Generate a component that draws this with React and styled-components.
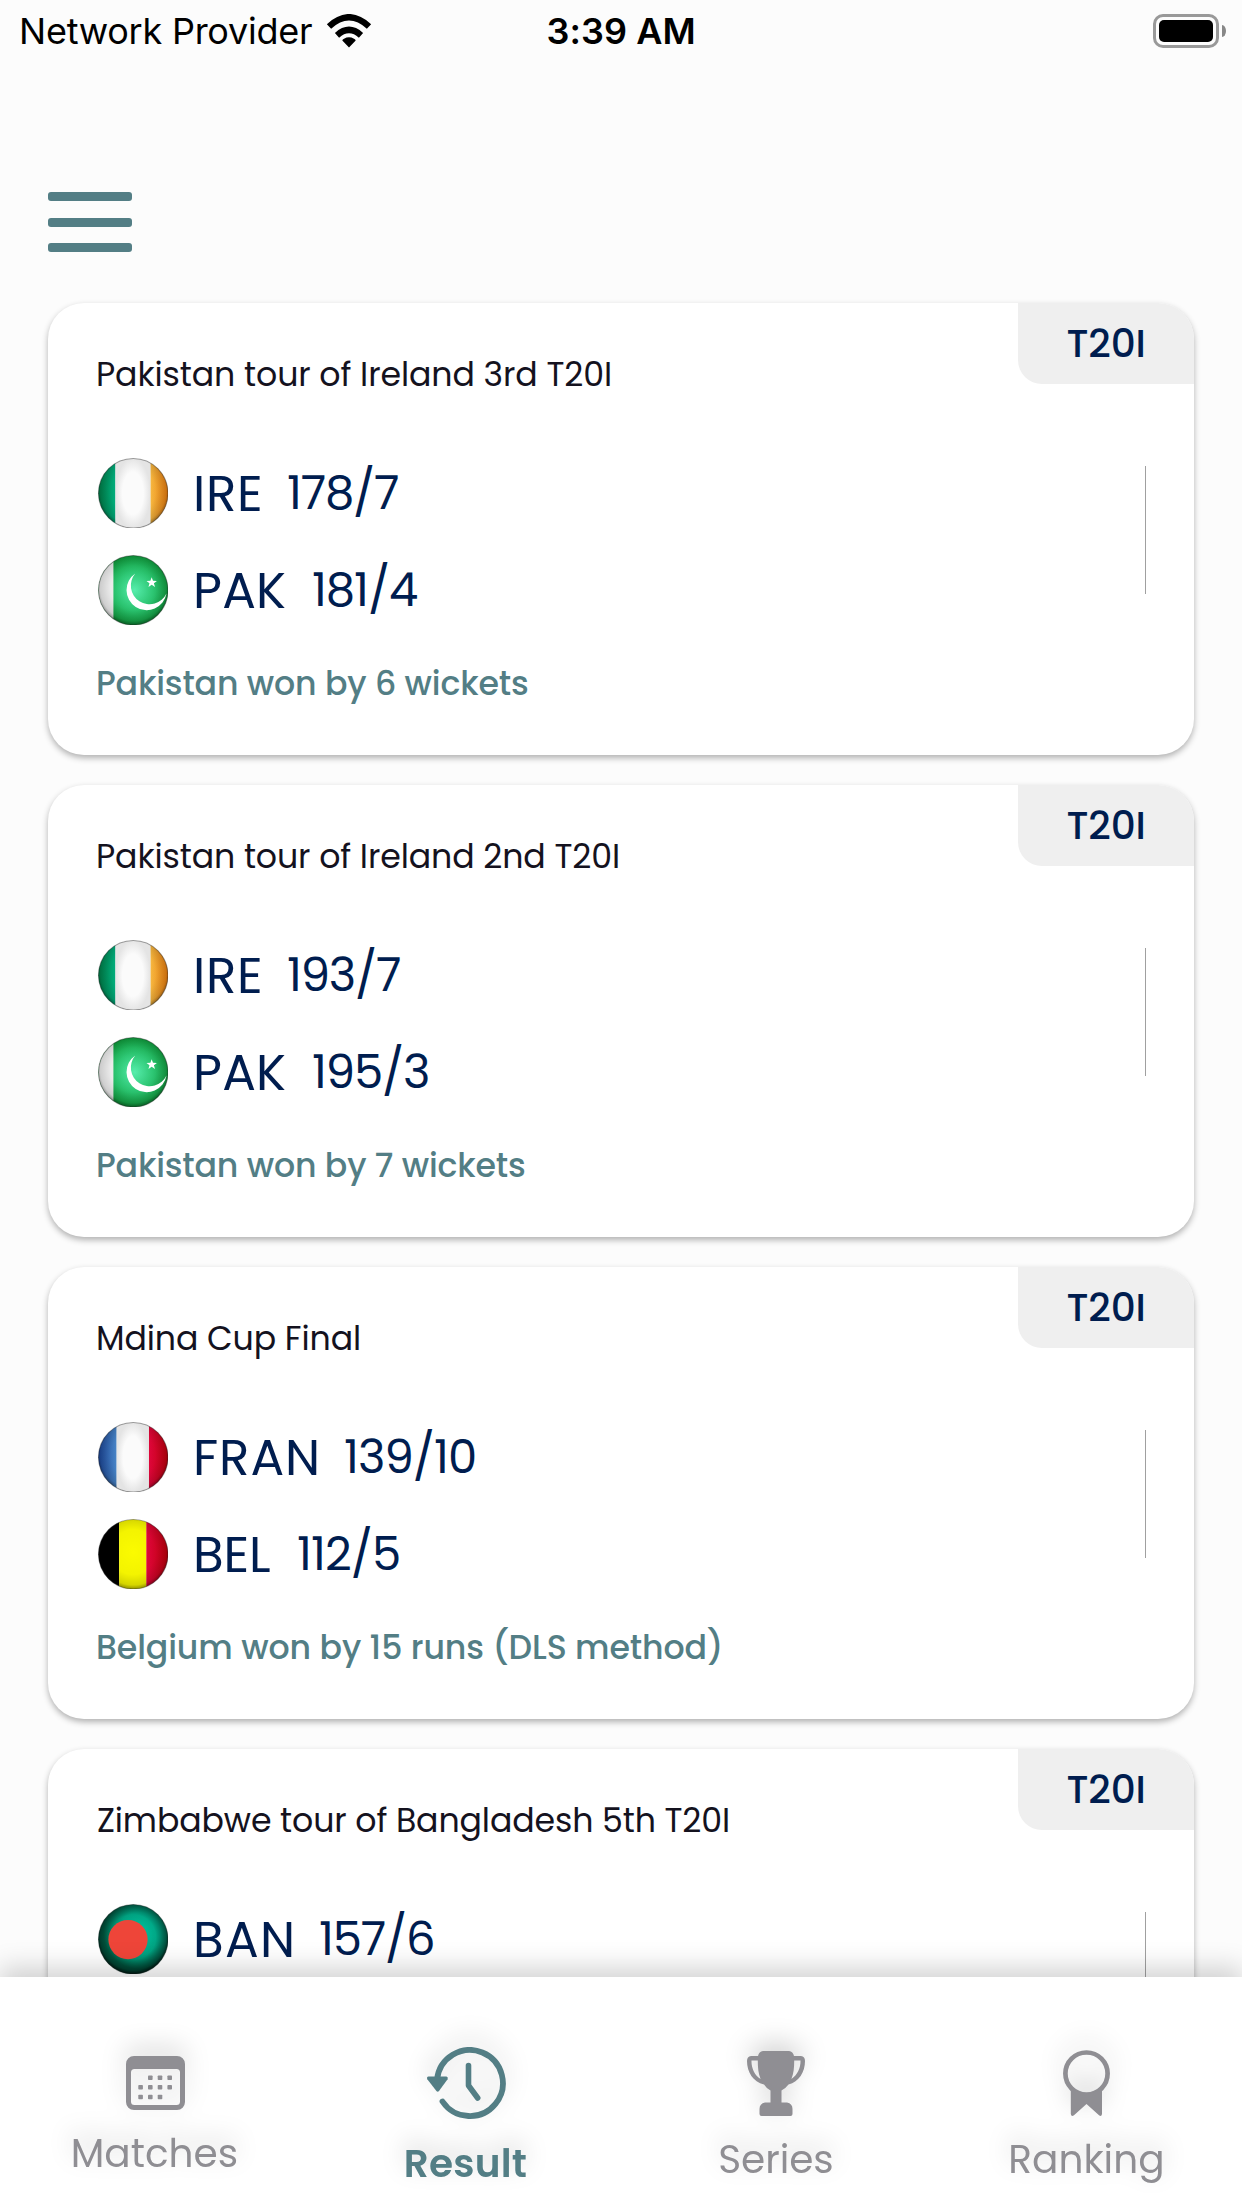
import React, { useLayoutEffect, useRef, useState } from 'react';
import styled, { createGlobalStyle } from 'styled-components';

const TEAL = '#537e85';
const NAVY = '#001d4f';
const GREY = '#8f8e93';

const matches = [
    {
        title: 'Pakistan tour of Ireland 3rd T20I', titleWidth: 512,
        type: 'T20I',
        teams: [
            { flag: 'ireland', code: 'IRE', codeWidth: 64, score: '178/7', scoreWidth: 110 },
            { flag: 'pakistan', code: 'PAK', codeWidth: 89, score: '181/4', scoreWidth: 104 },
        ],
        result: 'Pakistan won by 6 wickets', resultWidth: 430,
    },
    {
        title: 'Pakistan tour of Ireland 2nd T20I', titleWidth: 520,
        type: 'T20I',
        teams: [
            { flag: 'ireland', code: 'IRE', codeWidth: 64, score: '193/7', scoreWidth: 112 },
            { flag: 'pakistan', code: 'PAK', codeWidth: 89, score: '195/3', scoreWidth: 115 },
        ],
        result: 'Pakistan won by 7 wickets', resultWidth: 427,
    },
    {
        title: 'Mdina Cup Final', titleWidth: 261,
        type: 'T20I',
        teams: [
            { flag: 'france', code: 'FRAN', codeWidth: 121, score: '139/10', scoreWidth: 130 },
            { flag: 'belgium', code: 'BEL', codeWidth: 74, score: '112/5', scoreWidth: 101 },
        ],
        result: 'Belgium won by 15 runs (DLS method)', resultWidth: 622,
    },
    {
        title: 'Zimbabwe tour of Bangladesh 5th T20I', titleWidth: 630,
        type: 'T20I',
        teams: [
            { flag: 'bangladesh', code: 'BAN', codeWidth: 96, score: '157/6', scoreWidth: 113 },
        ],
    },
];

// Tracks a line of text in or out until its ink is exactly `width` wide
const FitText = ({ as: Tag, width, children }) => {
    const ref = useRef(null);
    const [fit, setFit] = useState({});

    useLayoutEffect(() => {
        const css = getComputedStyle(ref.current);
        const ctx = document.createElement('canvas').getContext('2d');
        ctx.font = `${css.fontWeight} ${css.fontSize} ${css.fontFamily}`;
        const m = ctx.measureText(children);
        const ink = m.actualBoundingBoxLeft + m.actualBoundingBoxRight;
        setFit({
            letterSpacing: `${(width - ink) / (children.length - 1)}px`,
            textIndent: `${m.actualBoundingBoxLeft}px`,
        });
    }, [children, width]);

    return <Tag ref={ref} $width={width} style={fit}>{children}</Tag>;
};

const Flag = ({ name }) => (
    <FlagSvg viewBox="0 0 70 70">
        <defs>
            <clipPath id={`clip-${name}`}><circle cx="35" cy="35" r="34.6" /></clipPath>
            <radialGradient id={`shade-${name}`} cx="0.5" cy="0.47" r="0.53">
                <stop offset="0" stopColor="#000" stopOpacity="0" />
                <stop offset="0.6" stopColor="#000" stopOpacity="0.03" />
                <stop offset="0.88" stopColor="#000" stopOpacity={name === 'bangladesh' ? 0.4 : 0.15} />
                <stop offset="1" stopColor="#000" stopOpacity={name === 'bangladesh' ? 0.85 : 0.45} />
            </radialGradient>
            <radialGradient id={`white-${name}`} cx="0.5" cy="0.5" r="0.5">
                <stop offset="0.6" stopColor="#fbfbfb" />
                <stop offset="1" stopColor="#e4e4e4" />
            </radialGradient>
            <radialGradient id="pak-green" cx="0.52" cy="0.5" r="0.52">
                <stop offset="0" stopColor="#56edac" />
                <stop offset="0.5" stopColor="#2ecb76" />
                <stop offset="1" stopColor="#0c9a37" />
            </radialGradient>
            <radialGradient id="ban-green" cx="0.58" cy="0.42" r="0.5">
                <stop offset="0" stopColor="#00c8a4" />
                <stop offset="0.6" stopColor="#00a684" />
                <stop offset="1" stopColor="#006a4e" />
            </radialGradient>
            <linearGradient id="ire-green"><stop stopColor="#008048" /><stop offset="1" stopColor="#00b27f" /></linearGradient>
            <linearGradient id="ire-orange"><stop stopColor="#fdbd42" /><stop offset="1" stopColor="#ee7e0c" /></linearGradient>
            <linearGradient id="fra-blue"><stop stopColor="#1b469b" /><stop offset="1" stopColor="#4a88cc" /></linearGradient>
            <linearGradient id="fra-red"><stop stopColor="#e4063c" /><stop offset="1" stopColor="#c2000a" /></linearGradient>
        </defs>
        <g clipPath={`url(#clip-${name})`}>
            {name === 'ireland' && (
                <>
                    <rect width="17.3" height="70" fill="url(#ire-green)" />
                    <rect x="52" width="18" height="70" fill="url(#ire-orange)" />
                </>
            )}
            {name === 'pakistan' && (
                <>
                    <rect width="70" height="70" fill="url(#pak-green)" />
                    <rect width="15.3" height="70" fill="#f2f2f2" />
                </>
            )}
            {name === 'france' && (
                <>
                    <rect width="18.5" height="70" fill="url(#fra-blue)" />
                    <rect x="50.5" width="20" height="70" fill="url(#fra-red)" />
                </>
            )}
            {name === 'belgium' && (
                <>
                    <rect width="21" height="70" fill="#000" />
                    <rect x="21" width="27.2" height="70" fill="#fbfb00" />
                    <rect x="48" width="22" height="70" fill="url(#fra-red)" />
                </>
            )}
            {name === 'bangladesh' && <rect width="70" height="70" fill="url(#ban-green)" />}
            <circle cx="35" cy="35" r="35" fill={`url(#shade-${name})`} />
            {name === 'ireland' && <rect x="17.3" width="34.7" height="70" fill="url(#white-ireland)" />}
            {name === 'france' && <rect x="18.5" width="32" height="70" fill="url(#white-france)" />}
            {name === 'pakistan' && (
                <g fill="#fff">
                    <path d="M37 18.3A20 20 0 1 0 68 38.3A18.6 18.6 0 1 1 37 18.3Z" />
                    <path d="M53.3 22l1.3 3.6 3.9.1-3 2.4 1.1 3.7-3.3-2.2-3.2 2.2 1-3.7-3-2.4 3.9-.1z" />
                </g>
            )}
            {name === 'bangladesh' && <circle cx="29.8" cy="35.3" r="19.5" fill="#ee4539" />}
        </g>
        <circle cx="35" cy="35" r="34.5" fill="none" stroke="#222" strokeOpacity="0.4" />
    </FlagSvg>
);

const MatchCard = ({ match }) => (
    <Card>
        <CardHeader>
            <FitText as={Title} width={match.titleWidth}>{match.title}</FitText>
            <Tag><FitText as={TagText} width={76}>{match.type}</FitText></Tag>
        </CardHeader>
        <CardBody>
            <Teams>
                {match.teams.map((team) => (
                    <Team key={team.code}>
                        <Flag name={team.flag} />
                        <FitText as={TeamCode} width={team.codeWidth}>{team.code}</FitText>
                        <FitText as={Score} width={team.scoreWidth}>{team.score}</FitText>
                    </Team>
                ))}
            </Teams>
            <Divider />
        </CardBody>
        {match.result && <FitText as={Result} width={match.resultWidth}>{match.result}</FitText>}
    </Card>
);

const calendarDays = [
    [24.3, 21.7], [34, 21.7], [43.7, 21.7],
    [14.6, 31.3], [24.3, 31.3], [34, 31.3], [43.7, 31.3],
    [14.6, 41], [24.3, 41], [34, 41],
];

const CalendarIcon = () => (
    <Icon width="59" height="54" viewBox="0 0 59 54">
        <path
            fillRule="evenodd"
            d="M8 0h43a8 8 0 0 1 8 8v38a8 8 0 0 1-8 8H8a8 8 0 0 1-8-8V8a8 8 0 0 1 8-8zM8.5 13a3.5 3.5 0 0 0-3.5 3.5v29A3.5 3.5 0 0 0 8.5 49h42a3.5 3.5 0 0 0 3.5-3.5v-29a3.5 3.5 0 0 0-3.5-3.5z"
        />
        {calendarDays.map(([x, y]) => (
            <rect key={`${x}-${y}`} x={x - 2.3} y={y - 2.3} width="4.6" height="4.6" rx="0.8" />
        ))}
    </Icon>
);

const HistoryIcon = () => (
    <Icon width="80" height="72" viewBox="0 0 80 72">
        <g fill="none" stroke="currentColor" strokeLinecap="round" strokeLinejoin="round">
            <path d="M11 33A33 33 0 1 1 16.5 54.5" strokeWidth="5.8" />
            <path d="M42.5 18.5V38.5L51.7 51" strokeWidth="5.6" />
        </g>
        <path d="M2.5 29.5H20.5Q22.5 30 21.6 32.2L13 44Q11.7 45.6 10.4 44L1.3 32.2Q.3 30 2.5 29.5z" />
    </Icon>
);

const TrophyIcon = () => (
    <Icon width="58" height="65" viewBox="0 0 58 65">
        <path
            fillRule="evenodd"
            d="M16 0H42Q46 .5 47 5H54Q58 5.5 58 10C58 21 52 31 41.5 33.5Q38.5 37.5 34.5 39.5V51.5H40Q45.5 52.5 45.5 58V63Q45.5 65 43.5 65H14.5Q12.500 65 12.5 63V58Q12.5 52.5 18 51.5H23.5V39.5Q19.5 37.5 17 33.5C6 31 0 21 0 10Q0 5.5 4 5H11Q12 .5 16 0zM4.500 9.500C4.300 17 7.500 24 13.600 28C11.300 22.500 10.800 17 10.800 9.500zM53.500 9.500H47.200C47.200 17 46.700 22.500 44.400 28C50.500 24 53.700 17 53.500 9.500z"
        />
    </Icon>
);

const RibbonIcon = () => (
    <Icon width="47" height="66" viewBox="0 0 47 66">
        <circle cx="23.5" cy="23.6" r="21.1" fill="none" stroke="currentColor" strokeWidth="4.7" />
        <path d="M7.8 38Q14.500 43.300 23.500 43.300Q32.500 43.300 39 38V64Q38.500 67 36 65.300L23.500 54L11 65.300Q8.300 67 7.800 64z" />
    </Icon>
);

const tabs = [
    { label: 'Matches', width: 163, icon: CalendarIcon, top: 79, gap: 24 },
    { label: 'Result', width: 120, icon: HistoryIcon, top: 70, gap: 25, active: true },
    { label: 'Series', width: 112, icon: TrophyIcon, top: 74, gap: 24 },
    { label: 'Ranking', width: 151, icon: RibbonIcon, top: 73, gap: 24 },
];

const App = () => (
    <Screen>
        <GlobalStyle />
        <StatusBar>
            <Carrier>
                <FitText as={CarrierName} width={290}>Network Provider</FitText>
                <svg width="46" height="34" viewBox="0 0 46 34">
                    <path d="M23 33.5L16.3 26.5Q16.5 25.5 18 24.7Q23 22 28 24.7Q29.5 25.5 29.7 26.5z" />
                    <path d="M11 21.3Q23 10.5 35 21.3M3 12.5Q23-6 43 12.5" fill="none" stroke="#000" strokeWidth="6.3" />
                </svg>
            </Carrier>
            <FitText as={Clock} width={146}>3:39 AM</FitText>
            <BatteryArea>
                <Battery><BatteryLevel /></Battery>
                <BatteryTip />
            </BatteryArea>
        </StatusBar>
        <MenuButton><span /><span /><span /></MenuButton>
        <MatchList>
            {matches.map((match) => <MatchCard key={match.title} match={match} />)}
        </MatchList>
        <TabBar>
            {tabs.map(({ label, width, icon: TabIcon, top, gap, active }) => (
                <Tab key={label} $top={top} $gap={gap} $active={active}>
                    <TabIcon />
                    <FitText as={TabLabel} width={width}>{label}</FitText>
                </Tab>
            ))}
        </TabBar>
    </Screen>
);

export default App;

const GlobalStyle = createGlobalStyle`
    * { box-sizing: border-box; }

    body {
        margin: 0;
        background: #fcfcfc;
        font-family: Poppins, Inter, sans-serif;
    }
`;

const Screen = styled.div`
    display: flex;
    flex-direction: column;
    width: 1242px;
    height: 2208px;
    overflow: hidden;
    background: #fcfcfc;
`;

const Line = styled.div`
    width: ${(props) => props.$width}px;
    white-space: nowrap;
`;

const StatusBar = styled.div`
    flex: none;
    display: grid;
    grid-template-columns: 1fr auto 1fr;
    align-items: center;
    height: 60px;
    padding: 0 16px 0 15px;
    font-family: Inter, sans-serif;
`;

const Carrier = styled.div`
    display: flex;
    align-items: center;
    gap: 14px;
    padding-left: 7px;
`;

const CarrierName = styled(Line)`
    font-size: 36px;
    line-height: 62px;
`;

const Clock = styled(Line)`
    font-size: 36px;
    font-weight: 600;
    line-height: 62px;
`;

const BatteryArea = styled.div`
    display: flex;
    align-items: center;
    justify-content: flex-end;
    gap: 3px;
`;

const Battery = styled.div`
    width: 66px;
    height: 34px;
    padding: 3px;
    border: 3px solid #999;
    border-radius: 10px;
`;

const BatteryLevel = styled.div`
    height: 100%;
    border-radius: 5px;
    background: #000;
`;

const BatteryTip = styled.div`
    width: 4px;
    height: 12px;
    border-radius: 0 4px 4px 0 / 0 6px 6px 0;
    background: #888;
`;

const MenuButton = styled.div`
    flex: none;
    display: flex;
    flex-direction: column;
    justify-content: space-between;
    width: 84px;
    height: 60px;
    margin: 132px 0 51px 48px;

    span {
        height: 9px;
        border-radius: 3px;
        background: ${TEAL};
    }
`;

const MatchList = styled.div`
    flex: 1;
    min-height: 0;
    display: flex;
    flex-direction: column;
    gap: 30px;
    padding: 0 48px;
`;

const Card = styled.div`
    flex: none;
    height: 452px;
    border-radius: 36px;
    background: #fff;
    box-shadow: 0 3px 6px rgba(0, 0, 0, 0.3);
`;

const CardHeader = styled.div`
    display: flex;
    justify-content: space-between;
    height: 91px;
    padding-left: 50px;
`;

const Title = styled(Line)`
    margin-top: 52px;
    color: #14121e;
    font-size: 33.2px;
    line-height: 40px;
`;

const Tag = styled.div`
    display: flex;
    align-items: center;
    justify-content: center;
    width: 176px;
    height: 81px;
    padding-right: 1px;
    border-radius: 0 36px 0 24px;
    background: #efefef;
`;

const TagText = styled(Line)`
    color: ${NAVY};
    font-size: 39px;
    font-weight: 500;
`;

const CardBody = styled.div`
    display: flex;
    justify-content: space-between;
    margin-top: 64px;
    padding: 0 48px 0 49.5px;
`;

const Teams = styled.div`
    display: flex;
    flex-direction: column;
    gap: 27px;
`;

const Team = styled.div`
    display: flex;
    align-items: center;
    gap: 28px;
    height: 70px;
    color: ${NAVY};
`;

const FlagSvg = styled.svg`
    width: 70.5px;
    height: 70.5px;
`;

const TeamCode = styled(Line)`
    padding-top: 2px;
    font-size: 50px;
    line-height: 60px;
`;

const Score = styled(Line)`
    font-size: 46.5px;
    line-height: 60px;
`;

const Divider = styled.div`
    width: 1px;
    height: 128px;
    margin-top: 8px;
    background: #a0a0a0;
`;

const Result = styled(Line)`
    margin: 39px 0 0 50px;
    color: ${TEAL};
    font-size: 33.2px;
    font-weight: 500;
    line-height: 40px;
`;

const TabBar = styled.div`
    position: relative;
    flex: none;
    display: grid;
    grid-template-columns: repeat(4, 1fr);
    height: 231px;
    background: #fff;
    box-shadow: 0 -10px 24px rgba(0, 0, 0, 0.17);
`;

const Tab = styled.div`
    display: flex;
    flex-direction: column;
    align-items: center;
    gap: ${(props) => props.$gap}px;
    padding-top: ${(props) => props.$top}px;
    color: ${(props) => (props.$active ? TEAL : GREY)};
    font-size: 39px;
    font-weight: ${(props) => (props.$active ? 600 : 400)};
    filter: drop-shadow(0 -9px 12px rgba(0, 0, 0, 0.16));
`;

const Icon = styled.svg`
    flex: none;
    fill: currentColor;
`;

const TabLabel = styled(Line)`
    line-height: 40px;
`;
